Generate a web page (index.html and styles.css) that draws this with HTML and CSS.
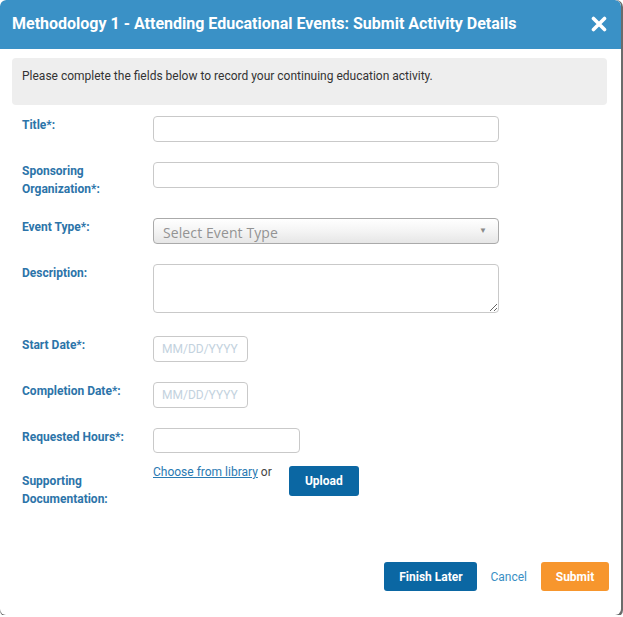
FILE: index.html
```
<!DOCTYPE html>
<html>
<head>
<meta charset="utf-8">
<link rel="stylesheet" href="styles.css">
</head>
<body>
<div class="modal">
  <div class="header">
    <h1 class="title">Methodology 1 - Attending Educational Events: Submit Activity Details</h1>
    <span class="close" aria-label="Close">
      <svg width="16" height="16" viewBox="0 0 16 16"><path d="M2.5 2.5 L13.5 13.5 M13.5 2.5 L2.5 13.5" stroke="#fff" stroke-width="3.6" stroke-linecap="round"/></svg>
    </span>
  </div>
  <div class="intro">Please complete the fields below to record your continuing education activity.</div>
  <div class="form">
    <div class="row">
      <label class="lbl">Title*:</label>
      <div class="ctl"><input class="txt wide" type="text"></div>
    </div>
    <div class="row">
      <label class="lbl">Sponsoring<br>Organization*:</label>
      <div class="ctl"><input class="txt wide" type="text"></div>
    </div>
    <div class="row">
      <label class="lbl">Event Type*:</label>
      <div class="ctl">
        <div class="select"><span class="sel-text">Select Event Type</span><span class="sel-arrow">&#9660;</span></div>
      </div>
    </div>
    <div class="row row-desc">
      <label class="lbl">Description:</label>
      <div class="ctl"><textarea class="area"></textarea></div>
    </div>
    <div class="row">
      <label class="lbl">Start Date*:</label>
      <div class="ctl"><input class="txt date" type="text" placeholder="MM/DD/YYYY"></div>
    </div>
    <div class="row">
      <label class="lbl">Completion Date*:</label>
      <div class="ctl"><input class="txt date" type="text" placeholder="MM/DD/YYYY"></div>
    </div>
    <div class="row row-hours">
      <label class="lbl">Requested Hours*:</label>
      <div class="ctl"><input class="txt hours" type="text"></div>
    </div>
    <div class="row row-docs">
      <label class="lbl lbl-docs">Supporting<br>Documentation:</label>
      <div class="ctl docs">
        <span class="docs-text"><a class="link" href="#">Choose from library</a> or</span>
        <span class="btn btn-blue btn-upload">Upload</span>
      </div>
    </div>
  </div>
  <div class="footer">
    <span class="btn btn-blue btn-later">Finish Later</span>
    <a class="cancel" href="#">Cancel</a>
    <span class="btn btn-orange btn-submit">Submit</span>
  </div>
</div>
</body>
</html>
```
FILE: styles.css
```
html, body {
  margin: 0;
  padding: 0;
  background: #ffffff;
}
body {
  font-family: Roboto, "Liberation Sans", Arial, sans-serif;
  font-size: 12px;
  color: #333;
}
.modal {
  width: 621px;
  height: 615px;
  background: #fff;
  border-radius: 6px;
  box-shadow: 1px 1px 0 1px #6b6b6b;
  display: flex;
  flex-direction: column;
  overflow: hidden;
}
.header {
  height: 47px;
  background: #3a91c6;
  display: flex;
  align-items: center;
  justify-content: space-between;
  padding: 0 14px 2px 12px;
  border-radius: 6px 6px 0 0;
}
.title {
  margin: 0;
  font-size: 16px;
  font-weight: 700;
  color: #fff;
  letter-spacing: 0;
}
.close {
  display: flex;
  width: 16px;
  height: 16px;
}
.intro {
  margin: 9px 14px 0 12px;
  height: 47px;
  box-sizing: border-box;
  padding: 10px 10px;
  background: #eeeeee;
  border-radius: 4px;
  font-size: 12px;
  line-height: 16px;
  color: #333;
}
.form {
  padding: 11px 0 0 22px;
}
.row {
  display: flex;
  align-items: flex-start;
  margin-bottom: 20px;
}
.lbl {
  width: 131px;
  flex: none;
  font-weight: 700;
  font-size: 12px;
  line-height: 18px;
  color: #2c74a9;
}
.ctl {
  display: flex;
  align-items: flex-start;
}
.txt {
  box-sizing: border-box;
  height: 26px;
  border: 1px solid #c9c9c9;
  border-radius: 4px;
  padding: 0 8px;
  font-family: Roboto, "Liberation Sans", Arial, sans-serif;
  font-size: 12px;
  background: #fff;
  outline: none;
}
.wide { width: 346px; }
.date { width: 95px; }
.hours { width: 147px; height: 25px; }
.date::placeholder {
  color: #c3d2de;
}
.select {
  box-sizing: border-box;
  width: 346px;
  height: 26px;
  border: 1px solid #aaaaaa;
  border-radius: 4px;
  background: linear-gradient(#ffffff 0%, #f4f4f4 50%, #e6e6e6 100%);
  display: flex;
  align-items: center;
  justify-content: space-between;
  padding: 0 11px 0 9px;
}
.sel-text {
  font-family: "Open Sans", "DejaVu Sans", sans-serif;
  font-size: 14px;
  letter-spacing: 0.1px;
  color: #939393;
  padding-top: 2px;
}
.sel-arrow {
  font-size: 8px;
  color: #8a8a8a;
  padding-bottom: 2px;
}
.row-desc { margin-bottom: 23px; }
.area {
  display: block;
  box-sizing: border-box;
  width: 346px;
  height: 49px;
  border: 1px solid #c9c9c9;
  border-radius: 4px;
  resize: vertical;
  outline: none;
  font-family: Roboto, "Liberation Sans", Arial, sans-serif;
}
.row-hours { margin-bottom: 10px; }
.lbl-docs { padding-top: 9px; }
.docs-text {
  line-height: 18px;
  font-size: 12px;
  color: #444;
}
.link {
  color: #2a7ab2;
  text-decoration: underline;
}
.btn {
  display: inline-flex;
  align-items: center;
  justify-content: center;
  box-sizing: border-box;
  border-radius: 3px;
  color: #fff;
  font-weight: 700;
  font-size: 12px;
}
.btn-blue { background: #0b67a3; }
.btn-orange { background: #f7962d; }
.btn-upload {
  width: 70px;
  height: 30px;
  margin: 3px 0 0 17px;
}
.footer {
  margin-top: auto;
  display: flex;
  align-items: center;
  justify-content: flex-end;
  padding: 0 12px 24px 0;
}
.btn-later {
  width: 93px;
  height: 29px;
}
.cancel {
  margin: 0 14px 0 13px;
  color: #3a8fc4;
  text-decoration: none;
  font-size: 12px;
}
.btn-submit {
  width: 68px;
  height: 29px;
}
```
